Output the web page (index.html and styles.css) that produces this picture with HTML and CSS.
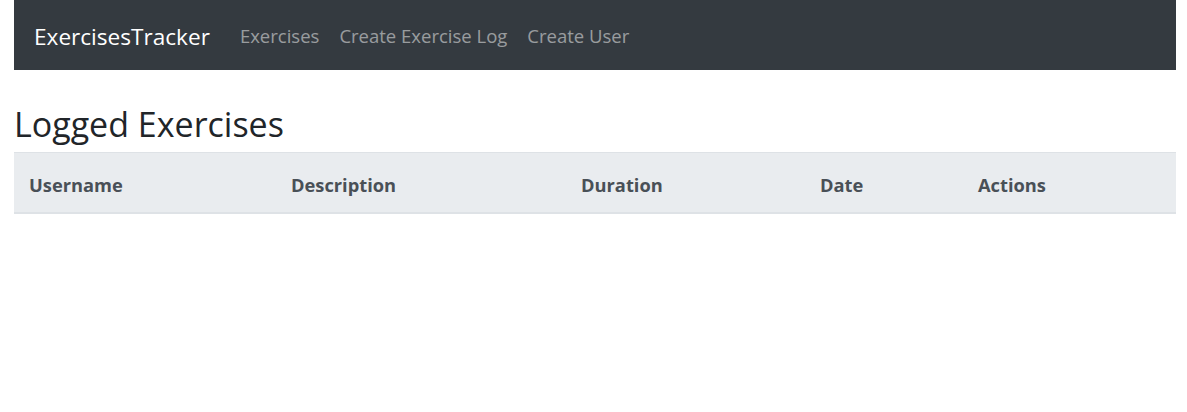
FILE: index.html
```html
<!DOCTYPE html>
<html lang="en">
<head>
<meta charset="utf-8">
<title>ExercisesTracker</title>
<link rel="stylesheet" href="styles.css">
</head>
<body>
<div class="container">
  <nav class="navbar">
    <a class="brand" href="#">ExercisesTracker</a>
    <ul class="nav">
      <li><a class="nav-link" href="#">Exercises</a></li>
      <li><a class="nav-link" href="#">Create Exercise Log</a></li>
      <li><a class="nav-link" href="#">Create User</a></li>
    </ul>
  </nav>
  <div class="spacer"></div>
  <h3 class="title">Logged Exercises</h3>
  <table class="table">
    <thead>
      <tr>
        <th class="c1">Username</th>
        <th class="c2">Description</th>
        <th class="c3">Duration</th>
        <th class="c4">Date</th>
        <th class="c5">Actions</th>
      </tr>
    </thead>
    <tbody></tbody>
  </table>
</div>
</body>
</html>
```

FILE: styles.css
```css
* { box-sizing: border-box; }
html, body { margin: 0; padding: 0; background: #fff; }
body {
  font-family: "Open Sans", "Noto Sans", sans-serif;
  color: #212529;
  font-size: 20px;
  line-height: 1.5;
}
.container {
  padding: 0 11px 0 14px;
}
.navbar {
  background: #343a40;
  height: 70px;
  display: flex;
  align-items: center;
  padding: 2px 20px 0;
}
.brand {
  color: #fff;
  text-decoration: none;
  font-size: 22.6px;
  margin-right: 20px;
  line-height: 37px;
}
.nav {
  list-style: none;
  margin: 0;
  padding: 0;
  display: flex;
}
.nav-link {
  display: block;
  padding: 0 10px;
  color: rgba(255,255,255,.5);
  text-decoration: none;
  font-size: 18.5px;
  line-height: 30px;
}
.spacer { height: 33px; }
.title {
  margin: 0 0 7px;
  font-size: 34px;
  font-weight: 500;
  line-height: 42px;
  color: #212529;
}
.table {
  width: 100%;
  border-collapse: collapse;
  table-layout: fixed;
}
.table th {
  text-align: left;
  background: #e9ecef;
  color: #495057;
  font-weight: 700;
  font-size: 18.3px;
  padding: 17px 15px 13px;
  line-height: 29px;
  border-top: 1px solid #dee2e6;
  border-bottom: 2px solid #dee2e6;
}
.c1 { width: 262px; }
.c2 { width: 290px; }
.c3 { width: 239px; }
.c4 { width: 158px; }
.c5 { width: auto; }
```
